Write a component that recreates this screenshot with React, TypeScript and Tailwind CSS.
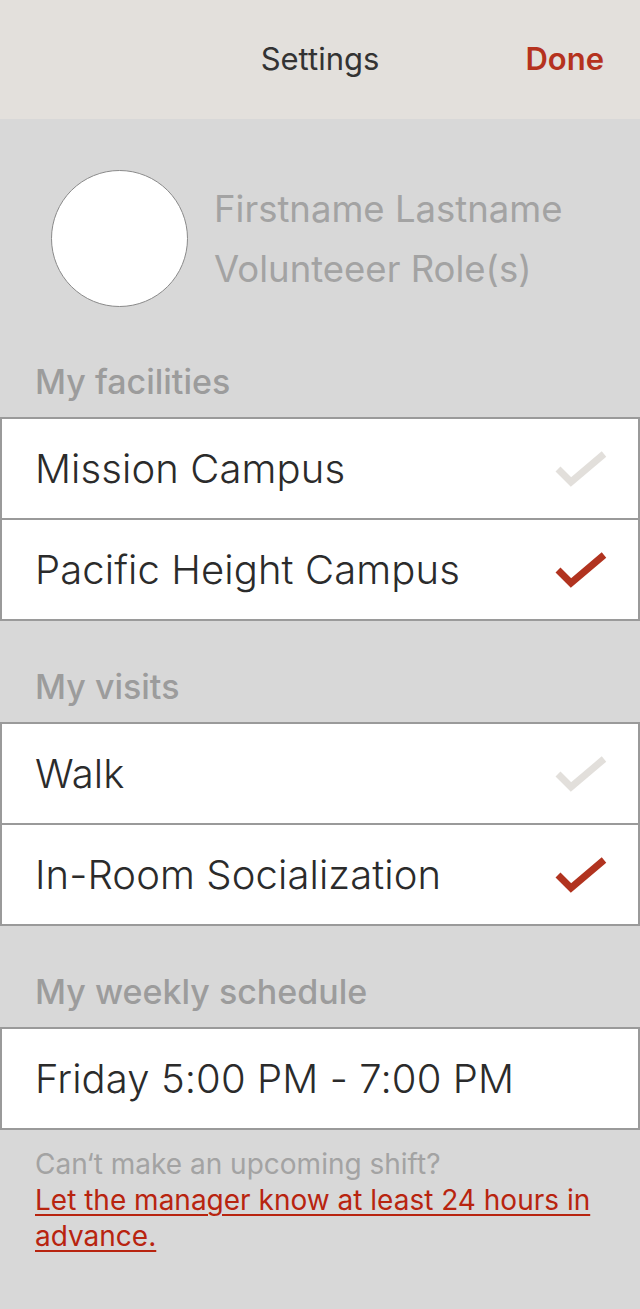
import React from 'react';

const Check = ({ on }: { on: boolean }) => (
  <svg width="56" height="40" viewBox="0 0 56 40" className="shrink-0">
    <polyline
      points="5,20 18,33 51,5"
      fill="none"
      stroke={on ? '#b1331f' : '#e2dfdb'}
      strokeWidth="7"
      strokeLinejoin="miter"
    />
  </svg>
);

const Group = ({ label, rows, first }: { label: string; rows: { text: string; on?: boolean }[]; first?: boolean }) => (
  <section className={first ? 'mt-[55px]' : 'mt-[46px]'}>
    <h2 className="px-[35px] text-[34px] font-medium leading-[40px] text-[#9c9c9c]">{label}</h2>
    <div className="mt-[15px] divide-y-2 divide-[#9a9a9a] border-2 border-[#9a9a9a] bg-white">
      {rows.map((row) => (
        <div key={row.text} className="box-content flex h-[99px] items-center justify-between pl-[33px] pr-[29px]">
          <span className="text-[40px] font-light tracking-[0.1px] text-[#2b2b2b]">{row.text}</span>
          {row.on !== undefined && <Check on={row.on} />}
        </div>
      ))}
    </div>
  </section>
);

export default function App() {
  return (
    <div className="min-h-[1309px] bg-[#d8d8d8] font-['Inter',sans-serif]">
      <header className="grid h-[119px] grid-cols-3 items-center bg-[#e3e0dc]">
        <div />
        <h1 className="text-center text-[31px] font-normal text-[#333333]">Settings</h1>
        <button className="justify-self-end pr-[36px] text-[31px] font-semibold text-[#b5321e]">Done</button>
      </header>

      <div className="flex items-center gap-[26px] pl-[51px] pt-[51px]">
        <div className="h-[137px] w-[137px] rounded-full border border-[#8a8a8a] bg-white" />
        <div className="text-[36.5px] leading-[60px] text-[#a3a3a3]">
          <p>Firstname Lastname</p>
          <p>Volunteeer Role(s)</p>
        </div>
      </div>

      <Group
        first
        label="My facilities"
        rows={[
          { text: 'Mission Campus', on: false },
          { text: 'Pacific Height Campus', on: true },
        ]}
      />
      <Group
        label="My visits"
        rows={[
          { text: 'Walk', on: false },
          { text: 'In-Room Socialization', on: true },
        ]}
      />
      <Group label="My weekly schedule" rows={[{ text: 'Friday 5:00 PM - 7:00 PM' }]} />

      <div className="mt-[16px] pl-[35px] pr-[8px] text-[28px] leading-[36px]">
        <p className="text-[#a3a3a3]">Can‘t make an upcoming shift?</p>
        <a href="#" className="text-[#b8240f] underline decoration-2 underline-offset-4">
          Let the manager know at least 24 hours in advance.
        </a>
      </div>
    </div>
  );
}
